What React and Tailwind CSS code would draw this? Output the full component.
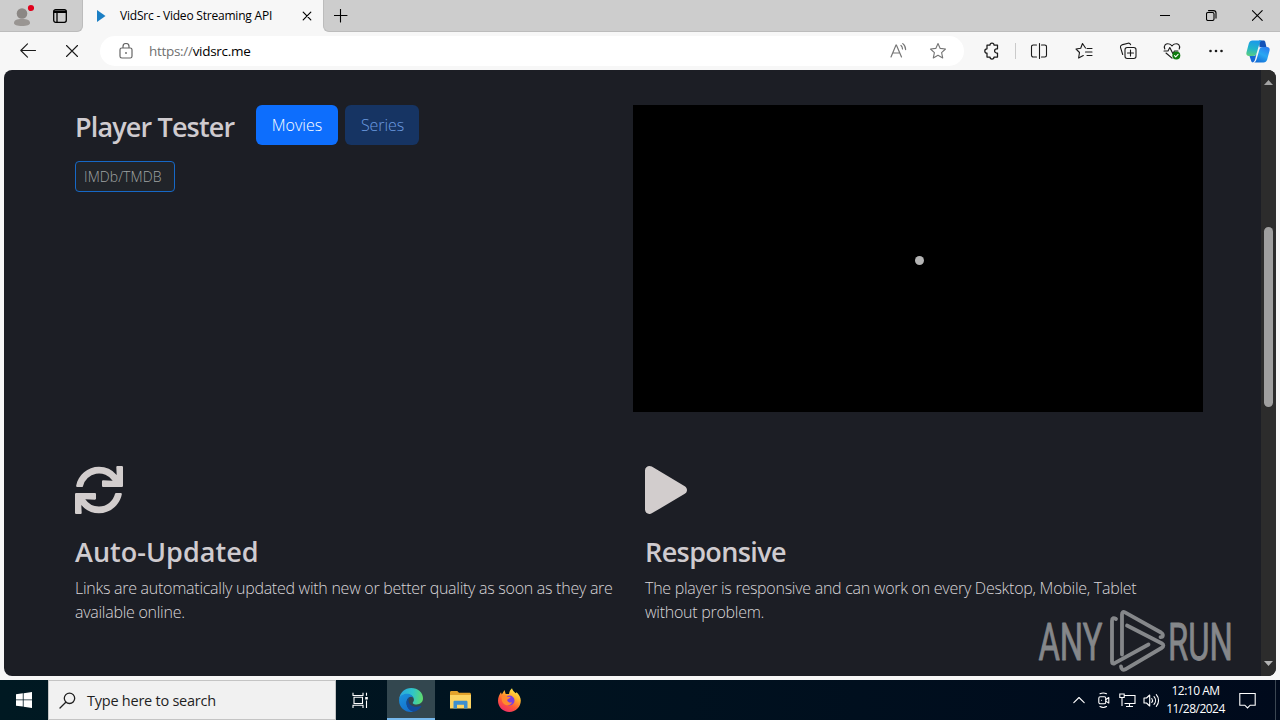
import React from "react";
import { FaSync, FaPlay } from "react-icons/fa";

function Icon({ size = 18, className = "", children }) {
  return (
    <svg
      width={size}
      height={size}
      viewBox={`0 0 ${size} ${size}`}
      fill="none"
      stroke="currentColor"
      strokeWidth="1.1"
      strokeLinecap="round"
      strokeLinejoin="round"
      className={"shrink-0 " + className}
    >
      {children}
    </svg>
  );
}

const STAR = "M9 1.5l2.2 4.9 5.3.6-3.9 3.6 1.1 5.3L9 13.3l-4.7 2.6 1.1-5.3L1.5 7l5.3-.6z";

function TabStrip() {
  return (
    <div className="flex h-8 bg-[#f7f7f7]">
      <div className="flex w-[83px] items-center rounded-br-md border-b border-r border-[#bcbcbc] bg-[#cdcdcd]">
        <svg width="24" height="24" viewBox="0 0 24 24" className="mb-[1px] ml-[10px]">
          <circle cx="12" cy="10.500" r="5.3" fill="#8b8784" />
          <path d="M4 20c0-2.8 2.5-4 8-4s8 1.200 8 4c0 1.800-3 3-8 3s-8-1.200-8-3z" fill="#999592" />
          <circle cx="21" cy="5" r="3.100" fill="#e0001b" />
        </svg>
        <Icon size={14} className="ml-[19px] text-black">
          <rect x="0.700" y="0.700" width="12.600" height="12.600" rx="2" strokeWidth="1.300" />
          <path d="M1 2.200h12M1 3.300h12M4 4v9" strokeWidth="1.300" />
        </Icon>
      </div>
      <div className="flex w-[240px] items-center">
        <svg width="9" height="12" viewBox="0 0 9 12" className="ml-[14px]">
          <path d="M0 0l8.500 6L0 12z" fill="#1b7fc4" />
        </svg>
        <span className="ml-[14px] w-[170px] whitespace-nowrap text-[12px] tracking-[-0.210px] text-black">
          VidSrc - Video Streaming API
        </span>
        <Icon size={10} className="ml-[12px] text-black">
          <path d="M1.200 1.200l7.600 7.600M8.800 1.200L1.200 8.800" strokeWidth="1.200" />
        </Icon>
      </div>
      <div className="flex flex-1 items-center rounded-bl-md border-b border-l border-[#bcbcbc] bg-[#cdcdcd] text-black">
        <Icon size={14} className="ml-[10px]">
          <path d="M6.500 0v13M0 6.500h13" />
        </Icon>
        <div className="ml-auto flex">
          <div className="flex w-[46px] justify-center">
            <Icon size={11}>
              <path d="M0 5.500h10" strokeLinecap="butt" strokeWidth="1" />
            </Icon>
          </div>
          <div className="flex w-[46px] justify-center">
            <Icon size={11}>
              <rect x="0.500" y="2.500" width="7.500" height="8" rx="1.500" />
              <path d="M2.500.6H7.500a2.500 2.500 0 0 1 2.500 2.500v5" />
            </Icon>
          </div>
          <div className="flex w-[46px] justify-center">
            <Icon size={11}>
              <path d="M.4.6l9.800 9.800M10.200.6L.4 10.400" />
            </Icon>
          </div>
        </div>
      </div>
    </div>
  );
}

function ToolButton({ children }) {
  return <div className="flex w-[44px] shrink-0 items-center justify-center">{children}</div>;
}

function Copilot() {
  return (
    <svg width="24" height="23" viewBox="0 0 24 23">
      <defs>
        <linearGradient id="cpA" x1="0.300" y1="0" x2="0.100" y2="1">
          <stop offset="0" stopColor="#1b9be8" />
          <stop offset="0.500" stopColor="#22b5c9" />
          <stop offset="1" stopColor="#5fd07a" />
        </linearGradient>
        <linearGradient id="cpB" x1="0.800" y1="0" x2="0.300" y2="1">
          <stop offset="0" stopColor="#2a7df0" />
          <stop offset="0.500" stopColor="#29a8f2" />
          <stop offset="1" stopColor="#1470d8" />
        </linearGradient>
      </defs>
      <path d="M13 .5h4.500c1 0 1.500.6 1.800 1.500l1.200 5.300h-7z" fill="#1352b8" />
      <path d="M6.500.5h9.300c-1.500.7-2 2-2.600 4l-2.400 8.300c-.6 2.200-1.600 3.200-3.800 3.200H3c-2.200 0-3.100-1.500-2.500-3.800L2.800 3.500C3.400 1.400 4.700.5 6.500.5z" fill="url(#cpA)" />
      <path d="M17.500 22.500H8.200c1.500-.7 2-2 2.600-4l2.400-8.300C13.800 8 14.800 7 17 7h4c2.200 0 3.100 1.500 2.500 3.800l-2.300 8.700c-.6 2.100-1.900 3-3.700 3z" fill="url(#cpB)" />
      <path d="M3.500 16H7c1.800 0 2.800-.6 3.500-2l-1.300 5c-.5 1.700-1 2.700-2 3.300-1 .4-1.700-.3-2-1.300z" fill="#1568d6" />
    </svg>
  );
}

function Toolbar() {
  return (
    <div className="flex h-[38px] items-center bg-[#f7f7f7] text-[#1a1a1a]">
      <Icon size={16} className="ml-[20px]">
        <path d="M15.500 7.500H.8M7.500.8L.8 7.500l6.700 6.700" />
      </Icon>
      <Icon size={12} className="ml-[30px] mr-[22px]">
        <path d="M.5.500l11 11M11.500.500l-11 11" />
      </Icon>
      <div className="flex h-[30px] w-[864px] items-center rounded-full bg-white pl-[19px]">
        <svg width="14" height="16" viewBox="0 0 14 16" fill="none" stroke="#666" strokeWidth="1.200">
          <rect x="1" y="5" width="12" height="10" rx="1.800" />
          <path d="M4 5V3.500a3 3 0 0 1 6 0V5" />
          <circle cx="7" cy="10" r="0.900" fill="#666" stroke="none" />
        </svg>
        <span className="ml-[16px] whitespace-nowrap text-[13.500px] tracking-[-0.300px] text-black">
          <span className="text-[#707070]">https://</span>vidsrc.me
        </span>
        <div className="ml-auto flex items-center pr-[17px] text-[#757575]">
          <svg width="17" height="16" viewBox="0 0 17 16" fill="none" stroke="currentColor" strokeWidth="1.200" strokeLinecap="round">
            <path d="M1 14L6 2h.4L11.500 14M2.700 10h7M11 2.500c1 .9 1.500 2 1.500 3.500M12.800.6c1.800 1.400 2.800 3.200 2.800 6" />
          </svg>
          <Icon size={18} className="ml-[22px]">
            <path d={STAR} />
          </Icon>
        </div>
      </div>
      <div className="ml-[6px] flex items-center">
        <ToolButton>
          <Icon size={18}>
            <path d="M4 3h3a2 2 0 0 1 4 0h3.500v3.800h-.8a2 2 0 0 0 0 4.200h.8v4H11a2 2 0 0 1-4 0H4v-3.800a2.200 2.200 0 0 1 0-4.400z" strokeWidth="1.250" />
          </Icon>
        </ToolButton>
        <div className="mx-[1px] h-4 w-px bg-[#cacaca]" />
        <ToolButton>
          <Icon size={18}>
            <path d="M6.500 3H3.200A1.700 1.700 0 0 0 1.500 4.700v8.600A1.700 1.700 0 0 0 3.200 15h3.300M11.500 3h3.300a1.700 1.700 0 0 1 1.700 1.700v8.600a1.700 1.700 0 0 1-1.700 1.700h-3.300M9.500 1.500v15" />
          </Icon>
        </ToolButton>
        <ToolButton>
          <Icon size={18} className="ml-px">
            <path d="M10.500 6L7.500 1.500 5.700 6.300 1 7l3.500 3.500-.9 5.500 4.700-2.500M12 6.500h5M10.500 10h6.500M12 13.500h5" />
          </Icon>
        </ToolButton>
        <ToolButton>
          <Icon size={18} className="ml-px">
            <rect x="6" y="5.500" width="11" height="11" rx="2.200" />
            <path d="M11.500 8v6M8.500 11h6M3.700 12.500L1.500 5.300a2 2 0 0 1 1.300-2.400l6.300-1.700a2 2 0 0 1 2.500 1.500" />
          </Icon>
        </ToolButton>
        <ToolButton>
          <Icon size={18} className="ml-px">
            <path d="M1.800 7C.3 3.500 3 1.500 5.200 1.700 7 1.800 8.200 2.700 9 4c.8-1.300 2-2.200 3.800-2.300C15 1.500 17.700 3.500 16.200 7M1 9h4l1.800-3.500 3 6L11.500 9H15M3 11l6 5.200" />
            <circle cx="13.300" cy="13.500" r="4" fill="#107c10" stroke="none" />
            <path d="M11.500 13.600l1.200 1.200 2.400-2.500" stroke="#fff" />
          </Icon>
        </ToolButton>
        <ToolButton>
          <svg width="14" height="4" viewBox="0 0 14 4" fill="#1a1a1a" className="ml-px">
            <circle cx="1.500" cy="2" r="1.300" />
            <circle cx="7" cy="2" r="1.300" />
            <circle cx="12.500" cy="2" r="1.300" />
          </svg>
        </ToolButton>
        <div className="ml-px flex w-[40px] justify-center">
          <Copilot />
        </div>
      </div>
    </div>
  );
}

function Watermark() {
  return (
    <svg
      width="204"
      height="68"
      viewBox="0 0 204 68"
      className="absolute left-[1032px] top-[538px]"
      fill="none"
      stroke="#85878a"
      strokeWidth="3.800"
      strokeLinejoin="round"
      strokeLinecap="round"
    >
      <g fill="#85878a" stroke="#85878a" strokeWidth="0.900" fontFamily="Roboto, sans-serif" fontSize="52">
        <text transform="translate(2.5 51.5) scale(0.63 1)">ANY</text>
        <text transform="translate(132 51.5) scale(0.63 1)">RUN</text>
      </g>
      <path d="M80 11c-2.500-1.500-4-1-4 2v40.500c0 2 1 2.500 2.700 1.700L112.500 36.500" />
      <path d="M86 46.500V6.500c0-2.300 1-3.200 3-2.100L125 24.500c2.800 1.700 2.300 4.500-.5 4.700" />
      <path d="M85 58.500c.3 3 2 4 4.300 2.800L125.500 40c2.500-1.500 2.500-3.300 0-4.800L91 17.500" />
    </svg>
  );
}

function Feature({ icon, title, titleClass, children }) {
  return (
    <div className="w-[570px] shrink-0 pr-6">
      <div className="h-12 text-[#d2cdcd]">{icon}</div>
      <h3 className={"mt-[21px] text-[27px] font-semibold leading-[34px] text-[#cfcbcf] " + titleClass}>{title}</h3>
      <div className="mt-[7px] whitespace-nowrap text-[16px] font-light leading-6 tracking-[-0.265px] text-[#d8d5d8]">
        {children}
      </div>
    </div>
  );
}

function Page() {
  return (
    <div className="relative mx-1 flex h-[606px] overflow-hidden rounded-lg bg-[#1c1e25]">
      <div className="flex-1 pl-[71px] pt-[35px]">
        <div className="flex">
          <div className="w-[558px]">
            <div className="flex h-10 items-center">
              <h3 className="w-[181px] whitespace-nowrap pt-[5px] text-[27px] font-semibold tracking-[-0.850px] text-[#cfcbcf]">
                Player Tester
              </h3>
              <button className="h-10 w-[82px] rounded-md bg-[#0d6efd] text-[16px] font-light text-white">Movies</button>
              <button className="ml-[7px] h-10 w-[74px] rounded-md bg-[#163463] pl-px text-[16px] font-light tracking-[-0.100px] text-[#6c9be0]">
                Series
              </button>
            </div>
            <div className="mt-4 flex h-[31px] w-[100px] items-center rounded border border-[#1668c6] bg-[#212429] pl-2 text-[14px] font-light tracking-[0.100px] text-[#a0a4a4]">
              IMDb/TMDB
            </div>
          </div>
          <div className="flex h-[307px] w-[570px] items-center justify-center bg-black">
            <div className="mb-[-3px] ml-[2px] h-[9px] w-[9px] rounded-full bg-[#b4b4b4]" />
          </div>
        </div>
        <div className="mt-[54px] flex">
          <Feature icon={<FaSync size={48} />} title="Auto-Updated" titleClass="tracking-[0.030px]">
            <p>Links are automatically updated with new or better quality as soon as they are</p>
            <p>available online.</p>
          </Feature>
          <Feature icon={<FaPlay size={48} className="w-[42px]" />} title="Responsive" titleClass="tracking-[-0.600px]">
            <p>The player is responsive and can work on every Desktop, Mobile, Tablet</p>
            <p>without problem.</p>
          </Feature>
        </div>
      </div>
      <Watermark />
      <div className="flex w-[15px] flex-col items-center bg-[#2c2c2c]">
        <svg width="9" height="5" viewBox="0 0 9 5" className="mt-[10px]">
          <path d="M0 5L4.500 0 9 5z" fill="#a3a3a3" />
        </svg>
        <div className="mt-[142px] h-[180px] w-[9px] rounded-full bg-[#9f9f9f]" />
        <svg width="9" height="5" viewBox="0 0 9 5" className="mb-[10px] mt-auto">
          <path d="M0 0L4.500 5 9 0z" fill="#b3b3b3" />
        </svg>
      </div>
    </div>
  );
}

function EdgeLogo() {
  return (
    <svg width="24" height="24" viewBox="0 0 24 24">
      <defs>
        <linearGradient id="eTop" x1="0" y1="0.400" x2="1" y2="0.500">
          <stop offset="0" stopColor="#2aa5e0" />
          <stop offset="0.550" stopColor="#2fc5c9" />
          <stop offset="1" stopColor="#5fdb6b" />
        </linearGradient>
        <linearGradient id="eLeft" x1="0" y1="0" x2="0.500" y2="1">
          <stop offset="0" stopColor="#1b93dc" />
          <stop offset="1" stopColor="#1471cd" />
        </linearGradient>
      </defs>
      <path d="M.2 11C.8 4.500 6 0 12.200 0 19 0 24 4.800 24 10.300c0 4-3 6.200-6.300 6.200-2.500 0-4-.8-4-1.600 0-.6 1.200-1.100 1.200-3.100C14.900 8.500 11.500 6.300 8 6.300 4 6.300 1.300 8.500.2 11z" fill="url(#eTop)" />
      <path d="M.1 11.500C.5 8 4 5.800 8 5.800c3.800 0 6.900 2.700 6.900 6 0-2-1.400-3-2.900-3-3 0-4.500 3.200-4.500 6 0 4 2.800 7.700 7 8.900C6.500 25.200-.5 19.500.1 11.500z" fill="url(#eLeft)" />
      <path d="M11.500 8.900C8.500 9.800 7.500 12.500 7.500 15c0 4.500 3.500 8.500 7.500 8.700 3.300-.7 5.700-2.700 7.300-5.200.3-.6-.2-.9-.7-.7C16 20.500 9.500 17.500 9.500 12.500c0-1.600.8-2.900 2-3.600z" fill="#114a9b" />
    </svg>
  );
}

function FolderLogo() {
  return (
    <svg width="21" height="18" viewBox="0 0 21 18">
      <path d="M0 1.500C0 .6.500 0 1.300 0h6L9 1.800h10.500c.8 0 1.500.6 1.500 1.500V17H0z" fill="#e3a32b" />
      <path d="M0 4h21v13.500H0z" fill="#fcd462" />
      <path d="M3.500 17.500V11c0-.8.600-1.300 1.300-1.300h11.400c.7 0 1.300.5 1.300 1.300v6.500H14v-3.800H7v3.800z" fill="#3c8fcf" />
    </svg>
  );
}

function FirefoxLogo() {
  return (
    <svg width="23" height="24" viewBox="0 0 23 24">
      <defs>
        <linearGradient id="ffA" x1="0.800" y1="0" x2="0.250" y2="1">
          <stop offset="0" stopColor="#fff14f" />
          <stop offset="0.350" stopColor="#ffb02b" />
          <stop offset="0.650" stopColor="#ff5a36" />
          <stop offset="1" stopColor="#ef2a6b" />
        </linearGradient>
      </defs>
      <path d="M14 .2c.6 2.500 2 3.300 3.600 5l1-.9c2.300 2 4.200 5 4.200 8.300C22.800 19 17.800 24 11.400 24S0 19 0 12.800c0-3.500 1.500-6.500 3-8.500l.8 2.200L6.500 2l1.200 4L11 6c.2-2.200 1.300-4.500 3-5.800z" fill="url(#ffA)" />
      <circle cx="11.500" cy="12.500" r="5" fill="#7a3fe0" />
      <path d="M3.800 8.500C6 6.800 8.500 7.500 9.500 8.800l3 .2c0 1.500-3.200 1.700-3.400 3 .5 2.500 3.200 3 5 2.200-1 2.500-4 3.700-6.500 2.800C4.500 16 3 12.500 3.800 8.500z" fill="#ff8a2e" />
    </svg>
  );
}

function Taskbar() {
  return (
    <div className="flex h-10 items-stretch bg-linear-to-r from-[#001922] to-[#000a1c] text-white">
      <div className="flex w-12 items-center justify-center">
        <svg width="16" height="16" viewBox="0 0 16 16" fill="#fff">
          <path d="M0 2.200l6.800-.9v6.200H0zM7.600 1.200L16 0v7.500H7.600zM0 8.300h6.800v6.300L0 13.700zM7.600 8.300H16V16l-8.400-1.200z" />
        </svg>
      </div>
      <div className="flex w-[288px] items-center border border-[#c4c4c4] bg-[#f1f1f1] pl-[10px] text-[#1f1f1f]">
        <Icon size={17}>
          <circle cx="10.500" cy="6.300" r="5.200" strokeWidth="1.300" />
          <path d="M6.800 10.200L1 16" strokeWidth="1.300" />
        </Icon>
        <span className="ml-[11px] whitespace-nowrap pt-px text-[14.500px] tracking-[-0.240px]">Type here to search</span>
      </div>
      <div className="flex w-[51px] items-center pl-4">
        <Icon size={17}>
          <path d="M1 .8v2.700h10V.8M1 16v-2.700h10V16M2 5.300h8.500v6.200H2zM14.500.8v3M14.500 8.500v7.500" strokeLinecap="butt" strokeLinejoin="miter" />
          <path d="M13.200 5h2.600v2.500h-2.600z" fill="#fff" stroke="none" />
        </Icon>
      </div>
      <div className="flex w-12 items-center justify-center border-b-2 border-[#76b9ed] bg-[#33474f] pt-[1px]">
        <EdgeLogo />
      </div>
      <div className="ml-px flex w-12 items-center justify-center">
        <FolderLogo />
      </div>
      <div className="ml-px flex w-12 items-center justify-center">
        <FirefoxLogo />
      </div>
      <div className="ml-auto flex items-center">
        <Icon size={12} className="mr-[11px]">
          <path d="M.8 8.700L6 3.500l5.200 5.200" />
        </Icon>
        <Icon size={16} className="mr-[7px]">
          <rect x="2.800" y="4.800" width="7" height="7" rx="1.500" />
          <path d="M9.800 7.500l3-2v5.600l-3-2M4 1.800a7 7 0 0 1 6.500 0M4 14.600a7 7 0 0 0 6.500 0M5.500 8.300h.1" />
        </Icon>
        <Icon size={17} className="mr-[7px]">
          <path d="M5 3.500h11v8H5.500M10.500 11.500V14.500M7 14.500h7M.8 2h4.400v3.500H.8zM3 5.500v8.500" strokeLinecap="butt" strokeLinejoin="miter" />
        </Icon>
        <Icon size={17}>
          <path d="M1 6v5h2.500l3.200 3V3L3.500 6zM8.800 6.500c.9 1.200.9 2.800 0 4M11 4.700c2 2.200 2 5.400 0 7.600M13.300 2.700c3 3.300 3 8.300 0 11.600" />
        </Icon>
        <div className="w-[71px] text-center text-[12px] leading-[18px] tracking-[-0.500px]">
          <p className="whitespace-nowrap">12:10 AM</p>
          <p className="whitespace-nowrap">11/28/2024</p>
        </div>
        <Icon size={17} className="ml-[8px] mr-[19px]">
          <path d="M.8 1.500h15.400v11.700h-5L8.500 16l-2.700-2.800h-5z" strokeLinejoin="miter" />
        </Icon>
        <div className="mr-1 h-10 w-px bg-[#3b4652]" />
      </div>
    </div>
  );
}

export default function App() {
  return (
    <div className="flex h-[720px] w-[1280px] flex-col overflow-hidden bg-[#f7f7f7] font-['Open_Sans','Noto_Sans',sans-serif]">
      <TabStrip />
      <Toolbar />
      <Page />
      <div className="h-1" />
      <Taskbar />
    </div>
  );
}
